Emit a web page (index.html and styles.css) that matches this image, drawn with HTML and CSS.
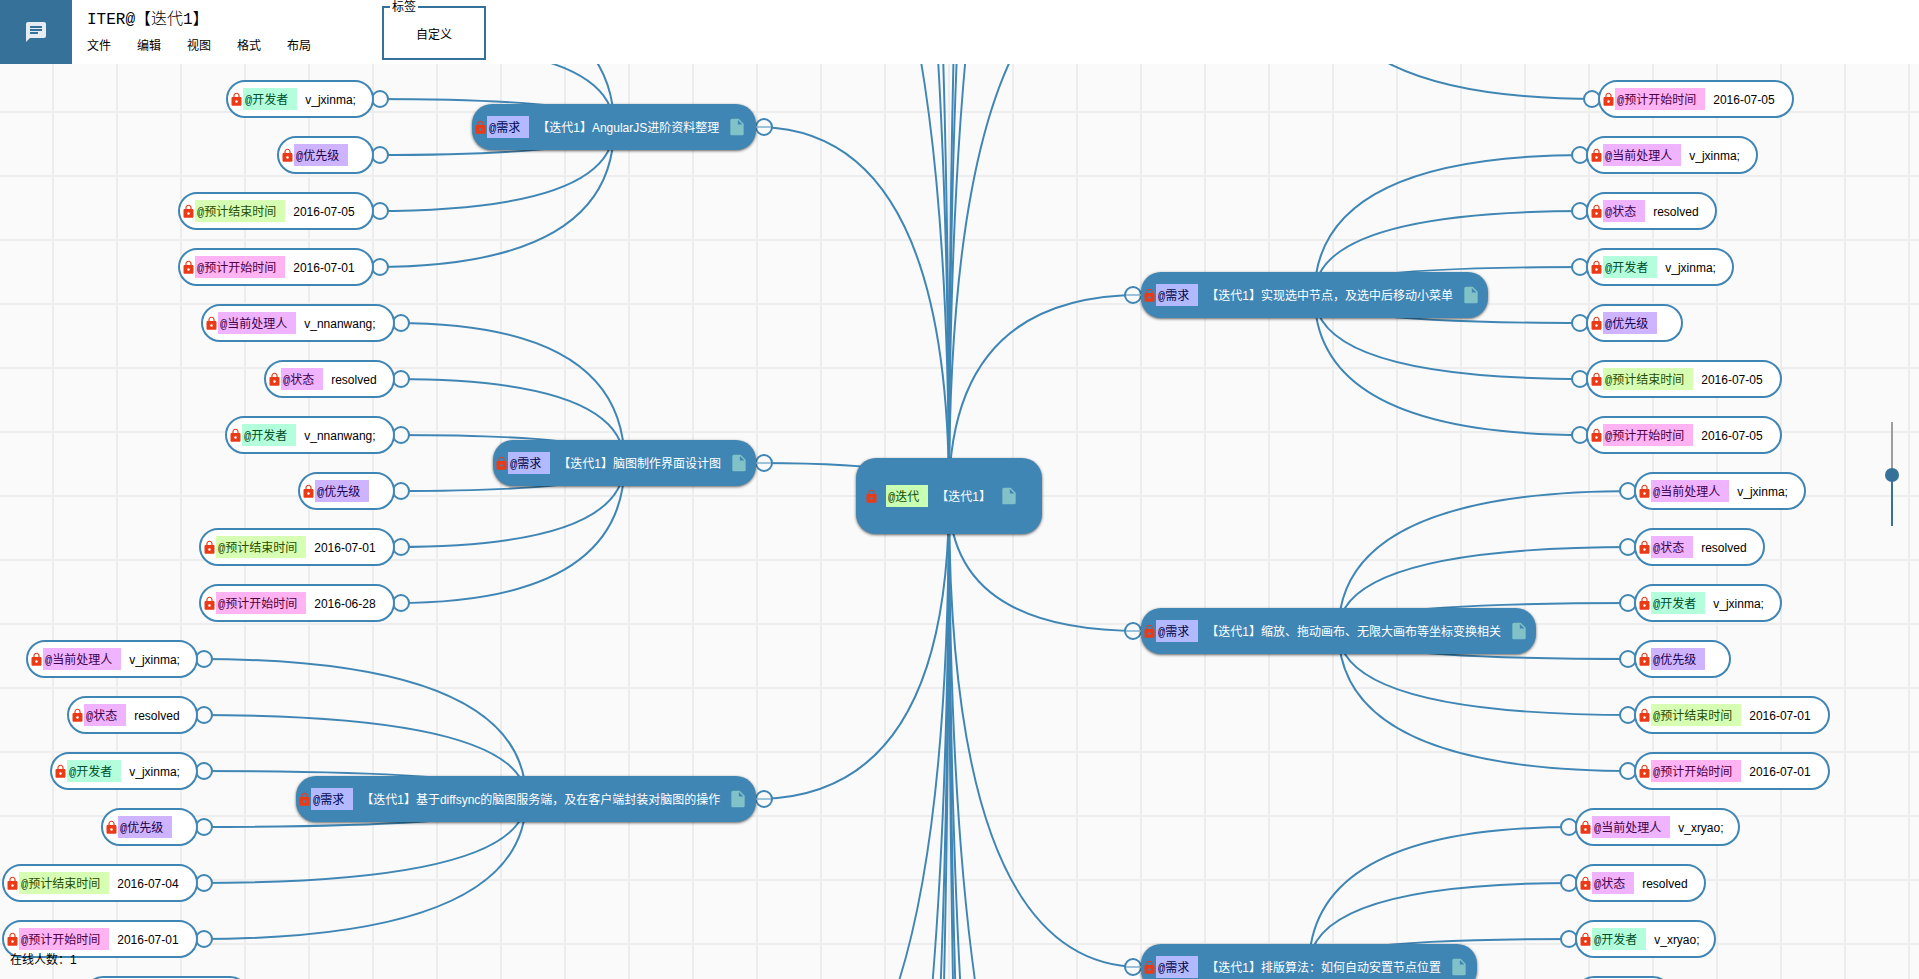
FILE: index.html
```html
<!DOCTYPE html>
<html lang="zh-CN">
<head>
<meta charset="utf-8">
<title>ITER@【迭代1】</title>
<link rel="stylesheet" href="styles.css">
</head>
<body>
<svg class="sprite" aria-hidden="true">
  <symbol id="icon-lock" viewBox="0 0 24 24">
    <path fill-rule="evenodd" d="M18 8h-1V6c0-2.76-2.24-5-5-5S7 3.24 7 6v2H6c-1.1 0-2 .9-2 2v10c0 1.1.9 2 2 2h12c1.1 0 2-.9 2-2V10c0-1.1-.9-2-2-2zm-6 9c-1.1 0-2-.9-2-2s.9-2 2-2 2 .9 2 2-.9 2-2 2zm3.100-9H8.900V6c0-1.710 1.390-3.100 3.100-3.100s3.100 1.390 3.100 3.100v2z"/>
  </symbol>
  <symbol id="icon-file" viewBox="0 0 24 24">
    <path fill-rule="evenodd" d="M6 2c-1.100 0-1.990.9-1.990 2L4 20c0 1.100.890 2 1.990 2H18c1.100 0 2-.9 2-2V8l-6-6H6zm7 7V3.500L18.500 9H13z"/>
  </symbol>
</svg>

<header class="header">
  <div class="logo">
    <svg class="logo-icon" viewBox="0 0 24 24" aria-hidden="true">
      <path fill-rule="evenodd" d="M20 2H4c-1.100 0-1.990.9-1.990 2L2 22l4-4h14c1.100 0 2-.9 2-2V4c0-1.100-.9-2-2-2zM6 9h12v2H6V9zm8 5H6v-2h8v2zm4-6H6V6h12v2z"/>
    </svg>
  </div>
  <div class="heading">
    <h1 class="title">ITER@【迭代1】</h1>
    <nav class="menu">
      <button class="menu-item" type="button">文件</button>
      <button class="menu-item" type="button">编辑</button>
      <button class="menu-item" type="button">视图</button>
      <button class="menu-item" type="button">格式</button>
      <button class="menu-item" type="button">布局</button>
    </nav>
  </div>
  <fieldset class="labels">
    <legend class="labels-legend">标签</legend>
    <button class="labels-custom" type="button">自定义</button>
  </fieldset>
</header>

<main class="canvas">
  <svg class="links" id="links" aria-hidden="true"></svg>
  <div id="nodes"></div>
</main>

<p class="online">在线人数：1</p>
<input class="zoom" type="range" min="0" max="100" value="49" aria-label="缩放">
<script src="map.js"></script>
</body>
</html>
```
FILE: styles.css
```css
* {
  box-sizing: border-box;
}

body {
  margin: 0;
  height: 100vh;
  display: flex;
  flex-direction: column;
  overflow: hidden;
  background-color: #fafafa;
  background-image:
    linear-gradient(to right, #ededed 2px, transparent 2px),
    linear-gradient(to bottom, #ededed 2px, transparent 2px);
  background-size: 64px 64px;
  background-position: 52px 47px;
  color: #000;
  font-family: "Liberation Sans", "Noto Sans CJK SC", sans-serif;
  font-size: 12px;
  line-height: 16px;
}

button {
  padding: 0;
  border: 0;
  background: none;
  color: inherit;
  font: inherit;
}

.sprite {
  display: none;
}

/* Header */
.header {
  position: relative;
  z-index: 3;
  flex: none;
  display: flex;
  height: 64px;
  background: #fff;
}

.logo {
  display: flex;
  align-items: center;
  justify-content: center;
  width: 72px;
  background: #36719a;
}

.logo-icon {
  width: 24px;
  height: 24px;
  fill: #e6edf2;
}

.heading {
  width: 310px;
  padding: 8px 0 0 15px;
}

.title {
  margin: 0;
  font-family: "Liberation Mono", "Noto Sans CJK SC", monospace;
  font-size: 16px;
  font-weight: 300;
  line-height: 24px;
}

.menu {
  display: flex;
  gap: 26px;
  margin-top: 6px;
}

.labels {
  width: 104px;
  height: 60px;
  min-width: 0;
  margin: 0;
  padding: 0 6px;
  border: 2px solid #36719a;
  text-align: center;
}

.labels-legend {
  margin: 0 auto 0 0;
  padding: 0 2px;
  line-height: 14px;
}

.labels-custom {
  margin-top: 13px;
}

/* Canvas */
.canvas {
  position: absolute;
  inset: 0;
  overflow: hidden;
}

.links {
  position: absolute;
  width: 100%;
  height: 100%;
  fill: none;
  stroke: #3f86b5;
  stroke-width: 2;
}

.link-knob {
  fill: #fafafa;
}

.link-minus {
  stroke: #9cc2da;
}

.node {
  position: absolute;
  display: flex;
  align-items: center;
  white-space: nowrap;
}

.node-leaf {
  height: 38px;
  padding-left: 1px;
  border: 2px solid #3f86b5;
  border-radius: 20px;
  background: #fff;
}

.node-branch,
.node-root {
  border-radius: 20px;
  background: #3f86b5;
  box-shadow: 0 1px 3px rgba(0, 0, 0, 0.6);
  color: #fff;
}

.node-branch {
  height: 46px;
}

.node-root {
  height: 76px;
  padding-left: 8px;
}

.node-lock {
  flex: none;
  width: 15px;
  height: 15px;
  fill: #eb3b16;
}

.node-leaf .node-lock {
  margin-right: -1px;
}

.node-branch .node-lock {
  margin-left: 1px;
  margin-right: -1px;
}

.node-root .node-lock {
  margin-right: 7px;
}

.node-file {
  width: 20px;
  height: 20px;
  margin-left: 8px;
  fill: #80c2c8;
}

.tag {
  height: 22px;
  padding: 5px 9px 0 2px;
  font-family: "Liberation Mono", "Noto Sans CJK SC", monospace;
}

.node-text {
  margin: 2px 0 0 8px;
}

.tag-iteration { background: #c8ffb3; color: #164d00; }
.tag-story { background: #b3b9ff; color: #00064d; }
.tag-owner,
.tag-status { background: #efb3ff; color: #3d004d; }
.tag-developer { background: #b3ffdb; color: #004d2b; }
.tag-priority { background: #ceb3ff; color: #1c004d; }
.tag-end { background: #d6ffb3; color: #284d00; }
.tag-start { background: #ffb3f3; color: #4d0041; }

/* Overlays */
.online {
  position: absolute;
  left: 10px;
  bottom: 11px;
  margin: 0;
}

.zoom {
  position: absolute;
  right: 20px;
  top: 422px;
  width: 14px;
  height: 104px;
  margin: 0;
  appearance: none;
  background: none;
  writing-mode: vertical-lr;
  direction: rtl;
}

.zoom::-webkit-slider-runnable-track {
  width: 2px;
  background: linear-gradient(#9e9e9e 50%, #36719a 50%);
}

.zoom::-webkit-slider-thumb {
  appearance: none;
  width: 14px;
  height: 14px;
  margin-left: -6px;
  border-radius: 50%;
  background: #36719a;
}
```
FILE: map.js
```js
const ROOT = { x: 949, y: 496, width: 186 };
const BRANCH_EDGE = { left: 756, right: 1141 };
const LEAF_OFFSET = 98;
const LEAF_STEP = 56;

const TAGS = {
  iteration: '@迭代',
  story: '@需求',
  owner: '@当前处理人',
  status: '@状态',
  developer: '@开发者',
  priority: '@优先级',
  end: '@预计结束时间',
  start: '@预计开始时间'
};
const LEAF_KINDS = ['owner', 'status', 'developer', 'priority', 'end', 'start'];

/* userWidth is the room taken by the developer's name in a leaf. */
const BRANCHES = [
  { side: 'left', y: 127, width: 284, text: '【迭代1】AngularJS进阶资料整理', user: 'v_jxinma;', userWidth: 52, end: '2016-07-05', start: '2016-07-01' },
  { side: 'left', y: 463, width: 263, text: '【迭代1】脑图制作界面设计图', user: 'v_nnanwang;', userWidth: 74, end: '2016-07-01', start: '2016-06-28' },
  { side: 'left', y: 799, width: 460, text: '【迭代1】基于diffsync的脑图服务端，及在客户端封装对脑图的操作', user: 'v_jxinma;', userWidth: 52, end: '2016-07-04', start: '2016-07-01' },
  { side: 'left', y: 1135, width: 409, text: '', user: 'v_xryao;', userWidth: 45, end: '', start: '' },
  { side: 'right', y: -41, width: 359, text: '', user: 'v_jxinma;', userWidth: 52, end: '2016-07-05', start: '2016-07-05' },
  { side: 'right', y: 295, width: 347, text: '【迭代1】实现选中节点，及选中后移动小菜单', user: 'v_jxinma;', userWidth: 52, end: '2016-07-05', start: '2016-07-05' },
  { side: 'right', y: 631, width: 395, text: '【迭代1】缩放、拖动画布、无限大画布等坐标变换相关', user: 'v_jxinma;', userWidth: 52, end: '2016-07-01', start: '2016-07-01' },
  { side: 'right', y: 967, width: 336, text: '【迭代1】排版算法：如何自动安置节点位置', user: 'v_xryao;', userWidth: 45, end: '', start: '' }
];

/* Branches outside the view, of which only the links are drawn. */
const FAR_BRANCHES = {
  left: [-881, -545, -209, 1471, 1807, 2143],
  right: [-1049, -713, -377, 1303, 1639, 1975, 2311]
};

const links = document.getElementById('links');
const nodes = document.getElementById('nodes');

function shape(name, attrs) {
  const el = document.createElementNS('http://www.w3.org/2000/svg', name);
  for (const key in attrs) el.setAttribute(key, attrs[key]);
  links.appendChild(el);
}

function link(x, y, toX, toY) {
  shape('path', { d: `M${x} ${y}Q${toX} ${y} ${toX} ${toY}` });
}

function knob(x, y) {
  shape('circle', { class: 'link-knob', cx: x, cy: y, r: 8 });
}

/* Nodes that lie wholly under the header or below the window are skipped. */
function visible(y, height) {
  return y + height / 2 > 64 && y - height / 2 < window.innerHeight;
}

function node(type, left, y, width, height, kind, text) {
  if (!visible(y, height)) return;
  const el = document.createElement('div');
  el.className = `node node-${type}`;
  el.style.left = `${left}px`;
  el.style.top = `${y - height / 2}px`;
  el.style.width = `${width}px`;
  el.innerHTML = '<svg class="node-lock" aria-hidden="true"><use href="#icon-lock"/></svg>' +
    `<span class="tag tag-${kind}">${TAGS[kind]}</span>` +
    (text ? `<span class="node-text">${text}</span>` : '') +
    (type === 'leaf' ? '' : '<svg class="node-file" aria-hidden="true"><use href="#icon-file"/></svg>');
  nodes.appendChild(el);
}

for (const side in FAR_BRANCHES) {
  for (const y of FAR_BRANCHES[side]) link(BRANCH_EDGE[side], y, ROOT.x, ROOT.y);
}

for (const b of BRANCHES) {
  const dir = b.side === 'left' ? -1 : 1;
  const edge = BRANCH_EDGE[b.side];
  const left = dir < 0 ? edge - b.width : edge;
  const leafEdge = edge + dir * (b.width + LEAF_OFFSET);
  const values = { owner: b.user, status: 'resolved', developer: b.user, priority: '', end: b.end, start: b.start };
  const room = { owner: b.userWidth, status: 47, developer: b.userWidth, priority: 1, end: 64, start: 64 };

  link(edge, b.y, ROOT.x, ROOT.y);
  knob(edge - dir * 8, b.y);
  shape('path', { class: 'link-minus', d: `M${edge} ${b.y}h${-dir * 15}` });

  LEAF_KINDS.forEach((kind, i) => {
    const y = b.y + (i - 2.5) * LEAF_STEP;
    const width = 60 + 12 * (TAGS[kind].length - 1) + room[kind];
    link(leafEdge, y, left + b.width / 2, b.y);
    knob(leafEdge - dir * 6, y);
    node('leaf', dir < 0 ? leafEdge - width : leafEdge, y, width, 38, kind, values[kind]);
  });
  node('branch', left, b.y, b.width, 46, 'story', b.text);
}

node('root', ROOT.x - ROOT.width / 2, ROOT.y, ROOT.width, 76, 'iteration', '【迭代1】');
```
